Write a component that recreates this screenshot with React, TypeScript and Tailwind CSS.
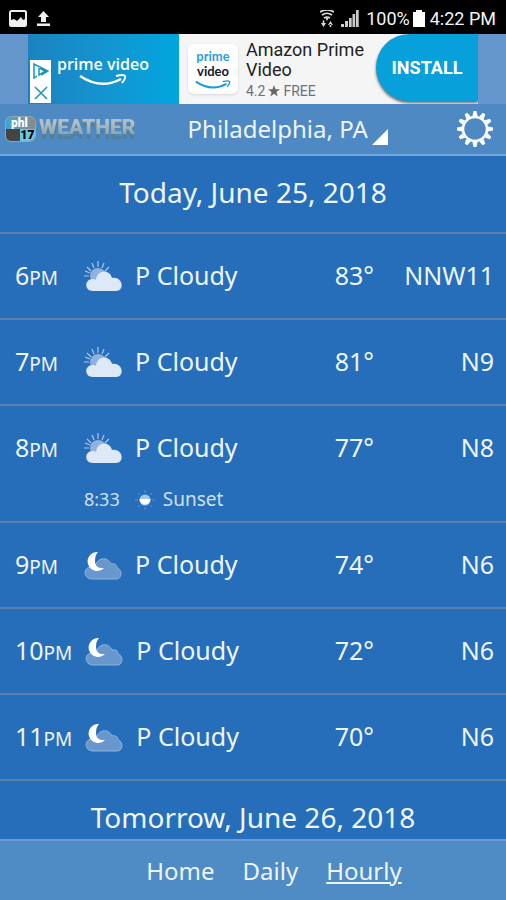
interface HourForecast {
  hour: string;
  period: string;
  night: boolean;
  temp: string;
  wind: string;
  sunset?: string;
}

const hours: HourForecast[] = [
  { hour: "6", period: "PM", night: false, temp: "83°", wind: "NNW11" },
  { hour: "7", period: "PM", night: false, temp: "81°", wind: "N9" },
  { hour: "8", period: "PM", night: false, temp: "77°", wind: "N8", sunset: "8:33" },
  { hour: "9", period: "PM", night: true, temp: "74°", wind: "N6" },
  { hour: "10", period: "PM", night: true, temp: "72°", wind: "N6" },
  { hour: "11", period: "PM", night: true, temp: "70°", wind: "N6" },
];

const StatusBar = () => (
  <div className="flex h-[34px] shrink-0 items-center bg-black pt-[2px] pr-[10px] pl-[9px] font-['Roboto',sans-serif] text-[18px] text-gray-100">
    <svg className="h-[17px] w-[18px]" viewBox="0 0 18 17" aria-hidden="true">
      <rect x="1" y="1" width="16" height="15" rx="1.5" fill="none" stroke="#eee" strokeWidth="2" />
      <path d="M2 10l3-1 3 2 4-4 2 3 2-1v6H2z" fill="#eee" />
    </svg>
    <svg className="ml-[10px] h-[15px] w-[13px]" viewBox="0 0 13 15" aria-hidden="true">
      <path d="M6.500 0L12 6H9v5H4V6H1zM0 12.500h13V15H0z" fill="#eee" />
    </svg>
    <svg className="ml-auto h-[17px] w-[14px]" viewBox="0 0 14 17" aria-hidden="true">
      <path d="M0 2q7-4 14 0M2 5q5-3.500 10 0M4 8q3-2 6 0" fill="none" stroke="#ddd" strokeWidth="1.700" />
      <path d="M5.500 8h3L7 11z" fill="#ddd" />
      <path d="M1 13h5l-2.500 4zM8 15h5l-2.500-4zM2.700 10.500h1.600V14H2.700zM9.700 14h1.600v3H9.700z" fill="#ddd" />
    </svg>
    <svg className="ml-[7px] h-[17px] w-[18px]" viewBox="0 0 18 17" aria-hidden="true">
      <path d="M0 14h3v3H0zM4 11h3v6H4zM8 8h2.700v9H8zM11.500 4h2.700v13h-2.700zM15 0h2.700v17H15z" fill="#ccc" />
    </svg>
    <span className="ml-[7px]">100%</span>
    <svg className="mr-[5px] ml-[3px] h-[17px] w-3" viewBox="0 0 12 17" aria-hidden="true">
      <path d="M3 0h6v2h3v15H0V2h3z" fill="#fff" />
    </svg>
    <span>4:22 PM</span>
  </div>
);

const Smile = ({ className, color }: { className: string; color: string }) => (
  <svg className={className} viewBox="0 0 48 13" fill="none" stroke={color} aria-hidden="true">
    <path d="M1 2q21 14 41 3" strokeWidth="2.500" />
    <path d="M37 2q8-2 9 0t-3 7" strokeWidth="2" />
  </svg>
);

const AdBanner = () => (
  <aside className="flex h-[70px] shrink-0 justify-center bg-[#6496cb]">
    <div className="flex w-full max-w-[450px] overflow-hidden bg-[#f5f5f5] font-['Roboto',sans-serif]">
      <div className="flex w-[151px] shrink-0 items-end bg-linear-to-r from-[#1b83bf] to-[#00a6df]">
        <div className="mb-px ml-[2px] flex h-[43px] w-[21px] flex-col items-center justify-around bg-white">
          <svg className="h-4 w-4" viewBox="0 0 16 16" fill="none" stroke="#1a95b5" strokeWidth="1.500" aria-label="Ad choices">
            <path d="M4 13L1 15V1l14 7-7 4M6 5v7l6-4-5-2.500" />
          </svg>
          <button aria-label="Close ad">
            <svg className="h-[14px] w-[14px]" viewBox="0 0 14 14" stroke="#1a95b5" strokeWidth="1.500">
              <path d="M1 1l12 12M13 1L1 13" />
            </svg>
          </button>
        </div>
        <div className="ml-[6px] flex flex-col items-center self-center pt-[2px] font-['Open_Sans',sans-serif]">
          <span className="text-[16px] leading-5 font-semibold text-white">prime video</span>
          <Smile className="h-[13px] w-12" color="#fff" />
        </div>
      </div>
      <div className="ml-[9px] flex h-[50px] w-[50px] shrink-0 flex-col items-center self-center rounded-md bg-white pt-[5px] font-['Lato',sans-serif] text-[13px] leading-[15px] font-bold shadow-sm">
        <span className="text-[#2b9fdd]">prime</span>
        <span className="text-gray-900">video</span>
        <Smile className="mt-px h-[10px] w-9" color="#1b9ad6" />
      </div>
      <div className="min-w-0 flex-1 pt-[6px] pl-[8px] text-[18px] leading-[20px] text-[#222]">
        <p className="whitespace-nowrap">Amazon Prime</p>
        <p>Video</p>
        <p className="flex items-center pt-px text-[14px] text-gray-500">
          4.2
          <svg className="mx-[3px] h-3 w-3" viewBox="0 0 12 12" fill="#666" aria-hidden="true">
            <path d="M6 0l1.500 4.200H12L8.400 7 9.700 11.500 6 8.800 2.300 11.500 3.600 7 0 4.200h4.500z" />
          </svg>
          FREE
        </p>
      </div>
      <button className="h-[67px] w-[102px] shrink-0 rounded-l-full bg-[#08a0db] text-[18px] font-bold text-white shadow-[0_2px_3px_#666]">
        INSTALL
      </button>
    </div>
  </aside>
);

const Logo = () => (
  <div className="flex items-center">
    <div className="flex h-[26px] w-[31px] flex-col overflow-hidden rounded-md border border-gray-400 bg-linear-to-r from-[#2fa9d0] to-[#888] font-['Roboto',sans-serif] font-black">
      <div className="h-3 pl-[5px] text-[12px] leading-3 text-white">phl</div>
      <div className="flex h-3 bg-[#444]">
        <span className="ml-auto w-[15px] bg-[#6fc4e0] text-center text-[12px] leading-3 text-black">17</span>
      </div>
    </div>
    <span className="mb-1 ml-[3px] bg-linear-to-b from-[#b4c0c6] from-30% to-[#8ba6b4] to-80% bg-clip-text font-['Roboto',sans-serif] text-[21px] leading-6 font-black text-transparent drop-shadow-[0_5px_0_#527f9c]">
      WEATHER
    </span>
  </div>
);

const Header = () => (
  <header className="flex h-[52px] shrink-0 items-center border-b-2 border-[#72a8df] bg-[#4e89c3] pr-[13px] pl-[5px]">
    <Logo />
    <button className="ml-[52px] flex items-end gap-[4px] text-[24px] leading-8">
      Philadelphia, PA
      <svg className="h-4 w-4" viewBox="0 0 16 16" fill="#fff" aria-hidden="true">
        <path d="M16 0v16H0z" />
      </svg>
    </button>
    <button className="ml-auto" aria-label="Settings">
      <svg className="h-9 w-9" viewBox="0 0 36 36" fill="none" stroke="#fff" aria-hidden="true">
        <circle cx="18" cy="18" r="12" strokeWidth="2.500" />
        {Array.from({ length: 12 }, (_, i) => (
          <path key={i} d="M16.500 0h3l1 5h-5z" fill="#fff" stroke="none" transform={`rotate(${i * 30} 18 18)`} />
        ))}
      </svg>
    </button>
  </header>
);

const DayIcon = () => (
  <svg className="h-[31px] w-[38px]" viewBox="0 0 38 31" aria-hidden="true">
    <path
      d="M14 0v6M8 2l2 5M20 2l-2 5M3 6l4 4M25 6l-4 4M1 10l5 2M0 15h5"
      stroke="#a9c8eb"
      strokeWidth="1.200"
    />
    <circle cx="14" cy="15" r="8" fill="#8fb2df" />
    <path d="M9 30c-9 0-9-12 0-12 1 0 2 0 3 1 1-11 14-11 16-2 11-2 13 13 4 13z" fill="#dde9f6" />
  </svg>
);

const NightIcon = () => (
  <svg className="h-[31px] w-[38px]" viewBox="0 0 38 31" aria-hidden="true">
    <path
      d="M8 29c-9 0-9-12-1-12 2 0 3 0 4 1 1-11 13-12 16-4 4-1 6 1 6 4 6 2 5 11-1 11z"
      fill="#6797cc"
      stroke="#8db4df"
    />
    <path d="M14 2a9.500 9.500 0 1 0 6 16q-9 1-9-7 0-6 3-9z" fill="#fff" />
  </svg>
);

const SunsetIcon = () => (
  <svg className="h-5 w-5" viewBox="0 0 20 20" aria-hidden="true">
    <path
      d="M10 0v3M10 17v3M0 10h3M17 10h3M3 3l2 2M15 15l2 2M17 3l-2 2M5 15l-2 2"
      stroke="#5a91ce"
    />
    <circle cx="10" cy="10" r="5.500" fill="#a9c5e6" />
    <path d="M4.500 9h11a5.500 5.500 0 0 1-11 0z" fill="#fff" />
  </svg>
);

const HourRow = ({ item }: { item: HourForecast }) => (
  <li className="border-b-2 border-[#5c7fa9] pr-3 pl-[15px] text-[25px]">
    <div className="flex h-[84px] items-center">
      <span className="min-w-[56px]">
        {item.hour}
        <span className="text-[19px]">{item.period}</span>
      </span>
      <span className="mr-[13px] ml-[13px]">{item.night ? <NightIcon /> : <DayIcon />}</span>
      <span className="flex-1">P Cloudy</span>
      <span>{item.temp}</span>
      <span className="w-[120px] text-right">{item.wind}</span>
    </div>
    {item.sunset && (
      <div className="flex h-[31px] items-start pl-[69px] text-[19px] leading-[18px] text-[#cfe0f5]">
        <span className="text-[18px]">{item.sunset}</span>
        <span className="mr-2 ml-[15px]">
          <SunsetIcon />
        </span>
        <span>Sunset</span>
      </div>
    )}
  </li>
);

const DayTitle = ({ children }: { children: string }) => (
  <h2 className="flex h-[78px] items-center justify-center border-b-2 border-[#5c7fa9] pb-1 text-[28px]">
    {children}
  </h2>
);

export default function App() {
  return (
    <div className="flex h-screen flex-col bg-[#266eb9] font-['Noto_Sans',sans-serif] text-[#eef5fd]">
      <StatusBar />
      <AdBanner />
      <Header />
      <main className="min-h-0 flex-1 overflow-hidden">
        <DayTitle>Today, June 25, 2018</DayTitle>
        <ul>
          {hours.map((item) => (
            <HourRow key={item.hour} item={item} />
          ))}
        </ul>
        <DayTitle>Tomorrow, June 26, 2018</DayTitle>
      </main>
      <nav className="flex h-[61px] shrink-0 items-center justify-center gap-7 border-t-2 border-[#6b9bd6] bg-[#4f8bc5] pl-[42px] text-[24px]">
        <a href="#home">Home</a>
        <a href="#daily">Daily</a>
        <a href="#hourly" className="underline" aria-current="page">
          Hourly
        </a>
      </nav>
    </div>
  );
}
